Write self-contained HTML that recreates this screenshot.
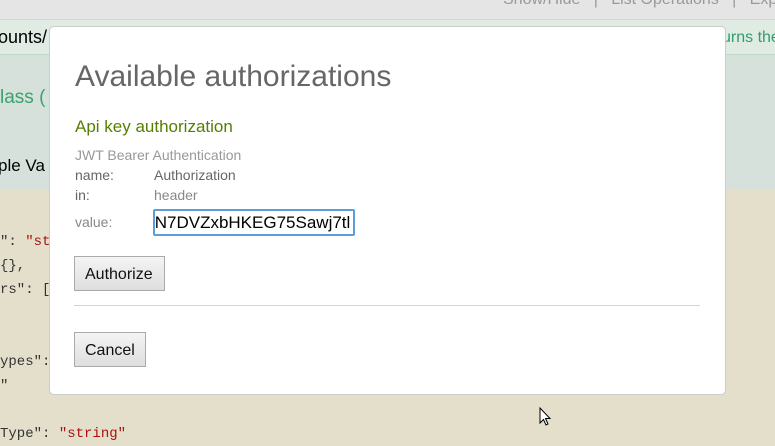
<!DOCTYPE html>
<html><head><style>
body{margin:0;width:775px;height:433px;overflow:hidden;position:relative;font-family:"Liberation Sans",Arial,sans-serif;background:#e4dfca}
.abs{position:absolute;white-space:nowrap}
.top{left:0;top:0;width:775px;height:19px;background:#e5e5e5;border-bottom:1px solid #c9dccf}
.green{left:0;top:20px;width:775px;height:169px;background:#d6e1dc}
.hdr{left:0;top:20px;width:775px;height:34px;background:#e0ebe4;border-bottom:1px solid #bfd6c8}
.code{font-family:"Liberation Mono",monospace;font-size:14px;color:#333}
.str{color:#a11}
.modal{left:49px;top:26px;width:675px;height:367px;background:#fff;border:1px solid #ccc;border-radius:5px}
.lbl{font-size:14px;color:#777}
.btn{position:absolute;background:linear-gradient(#f4f4f4,#dedede);border:1px solid #aaa;font-size:16px;color:#111;padding:0 10px;height:35px;line-height:35px;box-sizing:border-box}
</style></head><body>
<div class="abs top"></div>
<div class="abs" style="left:503px;top:-9px;font-size:16px;color:#999">Show/Hide &nbsp;&nbsp;|&nbsp;&nbsp; List Operations &nbsp;&nbsp;|&nbsp;&nbsp; Expo</div>
<div class="abs green"></div>
<div class="abs hdr"></div>
<div class="abs" style="left:-2px;top:27px;font-size:18px;color:#000">ounts/</div>
<div class="abs" style="left:722px;top:29px;font-size:16px;color:#2e9e6a">urns the</div>
<div class="abs" style="left:0;top:87px;font-size:19px;color:#3aa36b">lass (</div>
<div class="abs" style="left:-2px;top:156px;font-size:17px;color:#000">ple Va</div>
<div class="abs code" style="left:0;top:230px;line-height:24px">
": <span class="str">"st</span><br>{},<br>rs": [<br><br><br>ypes":<br>"<br><br>Type": <span class="str">"string"</span></div>
<div class="abs modal">
 <div class="abs" style="left:25px;top:33px;font-size:30px;color:#666">Available authorizations</div>
 <div class="abs" style="left:25px;top:90px;font-size:17px;color:#547f00">Api key authorization</div>
 <div class="abs lbl" style="left:25px;top:120px;color:#999">JWT Bearer Authentication</div>
 <div class="abs lbl" style="left:25px;top:140px;color:#666">name:</div>
 <div class="abs lbl" style="left:104px;top:140px;color:#666">Authorization</div>
 <div class="abs lbl" style="left:25px;top:160px;color:#666">in:</div>
 <div class="abs lbl" style="left:104px;top:160px;color:#888">header</div>
 <div class="abs lbl" style="left:25px;top:187px;color:#888">value:</div>
 <div class="abs" style="left:103px;top:182px;width:202px;height:27px;box-sizing:border-box;border:2px solid #5b9ddc;border-radius:2px;font-size:17px;line-height:23px;overflow:hidden;color:#000"><span style="margin-left:-5px">/N7DVZxbHKEG75Sawj7tl</span></div>
 <div class="btn" style="left:24px;top:229px;width:91px">Authorize</div>
 <div class="abs" style="left:24px;top:278px;width:626px;height:1px;background:#d4d4d4"></div>
 <div class="btn" style="left:24px;top:305px;width:72px">Cancel</div>
</div>
<svg class="abs" style="left:539px;top:407px" width="14" height="20" viewBox="0 0 14 20"><path d="M1 1 L1 16 L4.5 12.5 L7 18 L9 17 L6.5 11.5 L11 11.5 Z" fill="#fff" stroke="#000" stroke-width="1"/></svg>
</body></html>
